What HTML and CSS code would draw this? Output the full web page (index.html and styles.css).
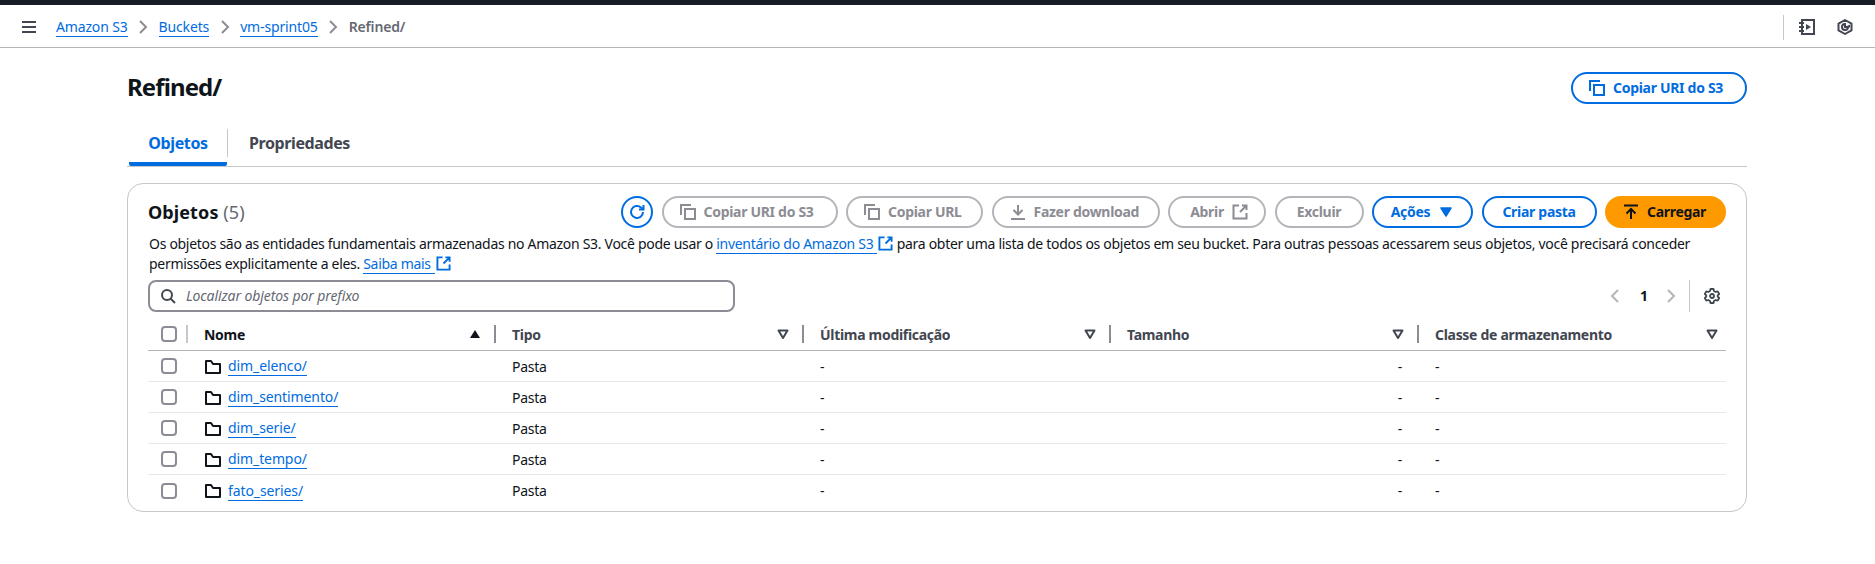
FILE: index.html
```html
<!DOCTYPE html>
<html lang="pt-BR">
<head>
<meta charset="utf-8">
<title>Refined/ - Amazon S3</title>
<link rel="stylesheet" href="styles.css">
</head>
<body>
<svg class="defs" width="0" height="0" aria-hidden="true">
  <symbol id="copy" viewBox="0 0 16 16"><path d="M1 11V1h10" fill="none" stroke="currentColor" stroke-width="2"/><path d="M5 5h10v10H5z" fill="none" stroke="currentColor" stroke-width="2"/></symbol>
  <symbol id="ext" viewBox="0 0 16 16"><path d="M14.5 9v5.500h-13v-13H7" fill="none" stroke="currentColor" stroke-width="2"/><path d="M10 1.500h4.500V6M14.500 1.500 8 8" fill="none" stroke="currentColor" stroke-width="2"/></symbol>
  <symbol id="folder" viewBox="0 0 16 16"><path d="M1 14V2h5l2 3h7v9z" fill="none" stroke="currentColor" stroke-width="2" stroke-linejoin="round"/></symbol>
  <symbol id="filter" viewBox="0 0 16 16"><path d="M3.500 4.500h9L8 12z" fill="none" stroke="currentColor" stroke-width="2" stroke-linejoin="round"/></symbol>
</svg>

<div class="topstrip"></div>
<nav class="nav">
  <svg class="burger" width="16" height="16" viewBox="0 0 16 16"><path d="M1 3h14M1 8h14M1 13h14" stroke="currentColor" stroke-width="2"/></svg>
  <ol class="crumbs">
    <li><a href="#">Amazon S3</a></li>
    <li class="chev"><svg width="16" height="16" viewBox="0 0 16 16"><path d="m5 2 6 6-6 6" fill="none" stroke="currentColor" stroke-width="2"/></svg></li>
    <li><a href="#">Buckets</a></li>
    <li class="chev"><svg width="16" height="16" viewBox="0 0 16 16"><path d="m5 2 6 6-6 6" fill="none" stroke="currentColor" stroke-width="2"/></svg></li>
    <li><a href="#">vm-sprint05</a></li>
    <li class="chev"><svg width="16" height="16" viewBox="0 0 16 16"><path d="m5 2 6 6-6 6" fill="none" stroke="currentColor" stroke-width="2"/></svg></li>
    <li class="current">Refined/</li>
  </ol>
  <div class="navtools">
    <svg width="16" height="16" viewBox="0 0 16 16"><path d="M3 1h12v14H3z" fill="none" stroke="currentColor" stroke-width="2"/><path d="M0 4h5M0 8h5M0 12h5" stroke="currentColor" stroke-width="2"/><path d="M7 5v6l5-3z" fill="currentColor"/></svg>
    <svg width="16" height="16" viewBox="0 0 16 16"><path d="M8 1 14.500 4.600v6.800L8 15l-6.500-3.600V4.600z" fill="none" stroke="currentColor" stroke-width="2" stroke-linejoin="round"/><path d="M8 5a3 3 0 1 0 3 3H8z" fill="none" stroke="currentColor" stroke-width="2"/><path d="M8 8l5-2.500v3z" fill="currentColor"/></svg>
  </div>
</nav>

<main class="page">
  <header class="pagehead">
    <h1>Refined/</h1>
    <button class="btn btn-normal btn-start w-uri"><svg class="ic"><use href="#copy"/></svg>Copiar URI do S3</button>
  </header>

  <div class="tabs">
    <a class="tab tab-active" href="#">Objetos</a>
    <a class="tab tab-next" href="#">Propriedades</a>
  </div>

  <section class="card">
    <div class="cardhead">
      <h2>Objetos <span class="count">(5)</span></h2>
      <div class="actions">
        <button class="btn btn-normal btn-round" aria-label="Atualizar"><svg width="16" height="16" viewBox="0 0 16 16"><path d="M14 8a6 6 0 1 1-2-4.500L14 5" fill="none" stroke="currentColor" stroke-width="2"/><path d="M14.500 1v4.500H10" fill="none" stroke="currentColor" stroke-width="2"/></svg></button>
        <button class="btn btn-off btn-start w-uri"><svg class="ic"><use href="#copy"/></svg>Copiar URI do S3</button>
        <button class="btn btn-off btn-start w-url"><svg class="ic"><use href="#copy"/></svg>Copiar URL</button>
        <button class="btn btn-off btn-start w-dl"><svg class="ic" viewBox="0 0 16 16"><path d="M8 1v9M3.500 6 8 10.500 12.500 6M1 15h14" fill="none" stroke="currentColor" stroke-width="2"/></svg>Fazer download</button>
        <button class="btn btn-off w-open">Abrir<svg class="ic ic-after"><use href="#ext"/></svg></button>
        <button class="btn btn-off w-del">Excluir</button>
        <button class="btn btn-normal w-act">Ações<svg class="ic ic-after" viewBox="0 0 16 16"><path d="M3 4h10l-5 8z" fill="currentColor" stroke="currentColor" stroke-width="1.500" stroke-linejoin="round"/></svg></button>
        <button class="btn btn-normal w-new">Criar pasta</button>
        <button class="btn btn-primary w-up"><svg class="ic" viewBox="0 0 16 16"><path d="M1 1.500h14M8 15V6M3.500 9.500 8 5l4.500 4.500" fill="none" stroke="currentColor" stroke-width="2"/></svg>Carregar</button>
      </div>
    </div>
    <p class="desc">Os objetos são as entidades fundamentais armazenadas no Amazon S3. Você pode usar o <a class="linkext" href="#">inventário do Amazon S3</a><svg class="ic-ext"><use href="#ext"/></svg> para obter uma lista de todos os objetos em seu bucket. Para outras pessoas acessarem seus objetos, você precisará conceder<br>permissões explicitamente a eles. <a class="linkext" href="#">Saiba mais</a><svg class="ic-ext"><use href="#ext"/></svg></p>

    <div class="toolbar">
      <label class="search">
        <svg width="16" height="16" viewBox="0 0 16 16"><circle cx="7" cy="7" r="5" fill="none" stroke="currentColor" stroke-width="2"/><path d="m10.500 10.500 4.500 4.500" stroke="currentColor" stroke-width="2"/></svg>
        <span>Localizar objetos por prefixo</span>
      </label>
      <div class="pager">
        <svg class="pg-arrow" width="16" height="16" viewBox="0 0 16 16"><path d="m11 2-6 6 6 6" fill="none" stroke="currentColor" stroke-width="2"/></svg>
        <span class="pg-num">1</span>
        <svg class="pg-arrow" width="16" height="16" viewBox="0 0 16 16"><path d="m5 2 6 6-6 6" fill="none" stroke="currentColor" stroke-width="2"/></svg>
        <span class="pg-sep"></span>
        <svg class="gear" width="16" height="16" viewBox="0 0 16 16"><path d="M6.500 1h3l.5 2 1.700 1 2-.6 1.500 2.600-1.500 1.400v1.200l1.500 1.400-1.500 2.600-2-.6-1.700 1-.5 2h-3l-.5-2-1.700-1-2 .6L.8 10.000l1.500-1.400V7.400L.8 6l1.500-2.600 2 .6 1.700-1z" fill="none" stroke="currentColor" stroke-width="1.800" stroke-linejoin="round"/><circle cx="8" cy="8" r="2" fill="none" stroke="currentColor" stroke-width="1.800"/></svg>
      </div>
    </div>

    <div class="table">
      <div class="row headrow">
        <div class="c-check"><span class="box"></span><span class="sep sep-light"></span></div>
        <div class="th th-sorted"><span class="th-label">Nome</span><svg class="sort" width="16" height="16" viewBox="0 0 16 16"><path d="M3 12 8 4l5 8z" fill="currentColor"/></svg><span class="sep"></span></div>
        <div class="th"><span class="th-label">Tipo</span><svg class="fl"><use href="#filter"/></svg><span class="sep"></span></div>
        <div class="th"><span class="th-label">Última modificação</span><svg class="fl"><use href="#filter"/></svg><span class="sep"></span></div>
        <div class="th"><span class="th-label">Tamanho</span><svg class="fl"><use href="#filter"/></svg><span class="sep"></span></div>
        <div class="th th-last"><span class="th-label">Classe de armazenamento</span><svg class="fl"><use href="#filter"/></svg></div>
      </div>
      <div class="row">
        <div class="c-check"><span class="box"></span></div>
        <div class="td"><svg class="fold"><use href="#folder"/></svg><a href="#">dim_elenco/</a></div>
        <div class="td">Pasta</div><div class="td">-</div><div class="td td-size">-</div><div class="td">-</div>
      </div>
      <div class="row">
        <div class="c-check"><span class="box"></span></div>
        <div class="td"><svg class="fold"><use href="#folder"/></svg><a href="#">dim_sentimento/</a></div>
        <div class="td">Pasta</div><div class="td">-</div><div class="td td-size">-</div><div class="td">-</div>
      </div>
      <div class="row">
        <div class="c-check"><span class="box"></span></div>
        <div class="td"><svg class="fold"><use href="#folder"/></svg><a href="#">dim_serie/</a></div>
        <div class="td">Pasta</div><div class="td">-</div><div class="td td-size">-</div><div class="td">-</div>
      </div>
      <div class="row">
        <div class="c-check"><span class="box"></span></div>
        <div class="td"><svg class="fold"><use href="#folder"/></svg><a href="#">dim_tempo/</a></div>
        <div class="td">Pasta</div><div class="td">-</div><div class="td td-size">-</div><div class="td">-</div>
      </div>
      <div class="row row-last">
        <div class="c-check"><span class="box"></span></div>
        <div class="td"><svg class="fold"><use href="#folder"/></svg><a href="#">fato_series/</a></div>
        <div class="td">Pasta</div><div class="td">-</div><div class="td td-size">-</div><div class="td">-</div>
      </div>
    </div>
  </section>
</main>
</body>
</html>
```
FILE: styles.css
```css
* { box-sizing: border-box; }
html, body { margin: 0; padding: 0; background: #fff; }
body { font: 14px/20px "Noto Sans", sans-serif; letter-spacing: -0.3px; color: #0f141a; width: 1875px; height: 564px; overflow: hidden; }
a { color: #006ce0; text-decoration: none; border-bottom: 1px solid #006ce0; }
.defs { position: absolute; }

.topstrip { height: 5px; background: #161d26; }
.nav { height: 43px; border-bottom: 1px solid #b4b4bb; display: flex; align-items: center; padding: 2px 0 0 21px; color: #424650; }
.burger { flex: none; }
.crumbs { list-style: none; margin: 0 0 0 19px; padding: 0; display: flex; align-items: center; font-size: 14px; letter-spacing: -0.15px; flex: 1; }
.crumbs li { display: flex; align-items: center; }
.crumbs a { line-height: 18px; }
.chev { color: #8c8c94; margin: 0 7.5px; }
.current { color: #656871; font-weight: 600; }
.navtools { display: flex; align-items: center; gap: 22px; height: 25px; border-left: 1px solid #c6c6cd; padding: 0 22px 0 15px; color: #424650; }

.page { padding: 0 128px 0 127px; }
.pagehead { display: flex; justify-content: space-between; align-items: center; height: 31px; margin-top: 24px; }
h1 { margin: 0; padding-bottom: 2px; font-size: 24px; line-height: 30px; font-weight: 700; letter-spacing: -0.9px; }

.btn { display: inline-flex; align-items: center; justify-content: center; height: 32px; padding: 0 18px; border-radius: 20px; border: 2px solid #006ce0; background: #fff; color: #006ce0; font: 700 14px/20px "Noto Sans", sans-serif; letter-spacing: -0.3px; white-space: nowrap; }
.btn-start { justify-content: flex-start; padding: 0 0 0 16px; }
.ic { width: 16px; height: 16px; margin-right: 8px; flex: none; }
.ic-after { margin: 0 0 0 8px; }
.btn-off { border-color: #b4b4bb; color: #8c8c94; }
.btn-primary { background: #ff9900; border-color: #ff9900; color: #0f141a; padding: 0 20px 0 18px; }
.btn-round { width: 32px; padding: 0; border-radius: 50%; }
.w-uri { width: 176px; } .w-url { width: 137px; } .w-dl { width: 168px; } .w-open { width: 98px; padding-left: 22px; }
.w-del { width: 89px; } .w-act { width: 101px; } .w-new { width: 115px; } .w-up { width: 121px; }

.tabs { display: flex; height: 39px; margin-top: 25px; border-bottom: 1px solid #c6c6cd; align-items: flex-start; }
.tab { border: 0; color: #424650; font-weight: 700; font-size: 16px; letter-spacing: -0.4px; display: flex; align-items: center; height: 28px; margin-top: 1px; }
.tab-active { color: #006ce0; width: 98px; height: 38px; margin-top: 0; padding-bottom: 4px; justify-content: center; margin-left: 2px; border-bottom: 4px solid #006ce0; border-radius: 2px; }
.tab-next { border-left: 1px solid #c6c6cd; padding: 0 0 0 21px; }

.card { margin-top: 16px; border: 1px solid #c6c6cd; border-radius: 16px; height: 329px; padding: 12px 20px 0 20px; }
.cardhead { display: flex; justify-content: space-between; align-items: center; height: 32px; }
h2 { margin: 0; font-size: 18px; line-height: 24px; font-weight: 700; letter-spacing: 0.1px; }
.count { font-weight: 400; color: #656871; }
.actions { display: flex; gap: 8.5px; }
.desc { margin: 6px 0 0 1px; font-size: 14px; line-height: 20px; color: #0f141a; }
.linkext { padding-right: 4px; }
.ic-ext { width: 15px; height: 15px; margin-left: 1px; vertical-align: -2px; color: #006ce0; }

.toolbar { display: flex; justify-content: space-between; align-items: center; height: 40px; margin-top: 2px; }
.search { width: 587px; height: 32px; border: 2px solid #8c8c94; border-radius: 8px; display: flex; align-items: center; gap: 10px; padding: 0 10px; color: #424650; }
.search span { font-style: italic; color: #656871; font-size: 14px; letter-spacing: -0.1px; }
.pager { display: flex; align-items: center; height: 40px; color: #b4b4bb; margin-right: 6px; }
.pg-num { color: #0f141a; font-weight: 700; margin: 0 16px 0 17px; width: 7px; }
.pg-sep { width: 1px; height: 32px; background: #c6c6cd; margin: 0 14px 0 10px; }
.gear { color: #424650; }

.table { margin-top: 2px; width: 1578px; }
.row { display: grid; grid-template-columns: 56px 308px 308px 307px 308px 291px; height: 31px; border-bottom: 1px solid #e8e8ec; align-items: center; }
.row-last { border-bottom: 0; }
.headrow { height: 33px; border-bottom: 1px solid #b4b4bb; font-weight: 700; }
.c-check { display: flex; align-items: center; padding-left: 13px; }
.box { width: 16px; height: 16px; border: 2px solid #8c8c94; border-radius: 4px; background: #fff; flex: none; }
.th { display: flex; align-items: center; padding-right: 16px; color: #424650; }
.th-sorted { color: #0f141a; }
.th-last { padding-right: 6px; }
.th-label { flex: 1; padding-top: 2px; }
.sep { width: 2px; height: 18px; background: #8c8c94; margin-left: 11px; flex: none; }
.sep-light { background: #c6c6cd; margin-left: 9px; }
.fl { width: 16px; height: 16px; color: #424650; flex: none; }
.sort { flex: none; }
.td { display: flex; align-items: center; padding-top: 1px; }
.td a { margin-left: 7px; line-height: 18px; letter-spacing: -0.1px; }
.fold { width: 16px; height: 16px; margin-left: 1px; flex: none; }
.td-size { justify-content: flex-end; padding-right: 33px; }
```
